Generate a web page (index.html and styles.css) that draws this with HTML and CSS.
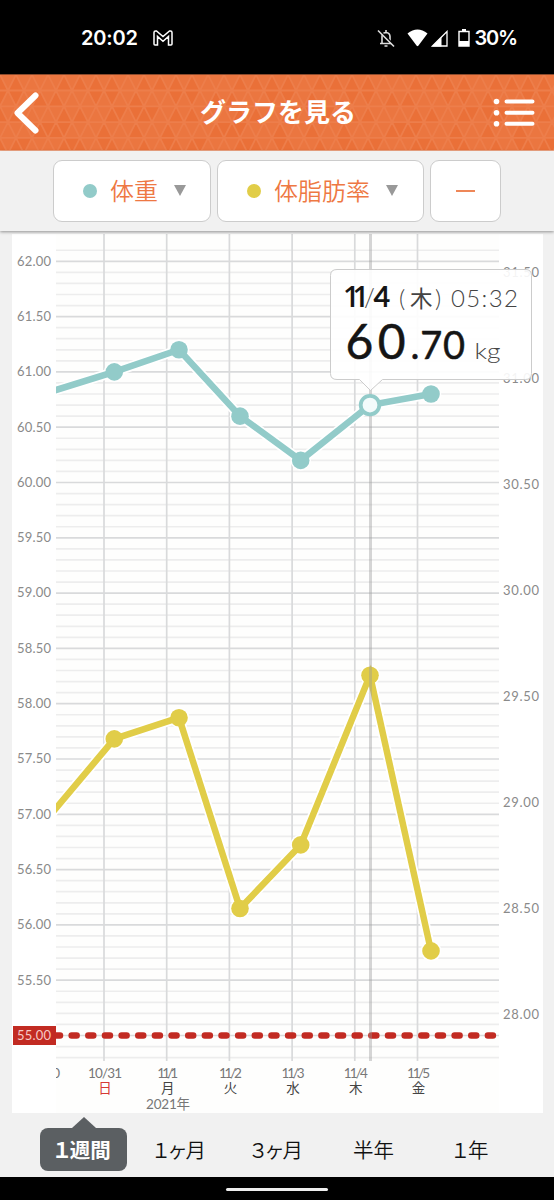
FILE: index.html
```html
<!DOCTYPE html>
<html lang="ja">
<head>
    <meta charset="UTF-8">
    <meta name="viewport" content="width=device-width, initial-scale=1.0">
    <title>グラフを見る</title>
    <link rel="stylesheet" href="styles.css">
</head>
<body>
    <div class="app">
        <!-- ステータスバー -->
        <div class="status-bar">
            <span class="clock">20:02</span>
            <svg class="icon-mail" width="20" height="16" viewBox="0 0 20 16">
                <path d="M1 14V2.5Q1 1 2.5 1H3.5L10 6.5 16.5 1H17.5Q19 1 19 2.5V14Q19 15 18 15H15.5V6.5L10 11.3 4.5 6.5V15H2Q1 15 1 14Z"/>
            </svg>
            <div class="status-right">
                <svg class="icon-bell" width="18" height="19" viewBox="0 0 18 19">
                    <path d="M3 14.5H15M5 14V7.5Q5 4 9 3.5Q13 4 13 7.5V14M9 3.5V1"/>
                    <path class="bell-cut" d="M2.5 1.5L18 17"/>
                    <path d="M1 1.5L17 17.5M7.5 17H10.5"/>
                </svg>
                <svg class="icon-wifi" width="21" height="18" viewBox="0 0 21 18">
                    <path d="M0.5 4.5Q10.5 -3.5 20.5 4.5L11.3 16.8Q10.5 17.6 9.7 16.8Z"/>
                </svg>
                <svg class="icon-signal" width="17" height="17" viewBox="0 0 17 17">
                    <path d="M1.5 16L16 1.5V16Z" fill="none" stroke="#fff" stroke-width="1.3"/>
                    <path d="M1 16.5L10.5 7V16.5Z" fill="#fff"/>
                </svg>
                <svg class="icon-battery" width="12" height="18" viewBox="0 0 12 18">
                    <path d="M1 2.5H11V17H1Z" fill="none" stroke="#fff" stroke-width="1.4"/>
                    <path d="M4 0H8V2.5H4ZM1 12H11V17H1Z" fill="#fff"/>
                </svg>
                <span class="percent">30%</span>
            </div>
        </div>

        <!-- ヘッダー -->
        <header class="header">
            <svg class="header-bg" id="headerBg" width="554" height="75"></svg>
            <svg class="icon-back" width="26" height="42" viewBox="0 0 26 42">
                <path d="M22.5 3.5L4.5 21 22.5 38.5"/>
            </svg>
            <h1>グラフを見る</h1>
            <svg class="icon-list" width="42" height="30" viewBox="0 0 42 30">
                <circle cx="3.5" cy="3.5" r="2.8"/>
                <circle cx="3.5" cy="14.8" r="2.8"/>
                <circle cx="3.5" cy="25.8" r="2.8"/>
                <path d="M13.5 3.5H39.5M13.5 14.8H39.5M13.5 25.8H39.5"/>
            </svg>
        </header>

        <!-- 項目の選択 -->
        <div class="filters">
            <button class="filter weight"><i class="dot"></i><span>体重</span><i class="arrow"></i></button>
            <button class="filter fat"><i class="dot"></i><span>体脂肪率</span><i class="arrow"></i></button>
            <button class="filter none"><i class="dash"></i></button>
        </div>

        <!-- グラフ -->
        <main class="chart-area">
            <svg class="chart" id="chart" width="531" height="879" viewBox="0 0 531 879">
                <defs>
                    <clipPath id="plotClip"><rect x="44" y="0" width="443" height="879"/></clipPath>
                </defs>
                <rect class="plot-bg" x="44" y="0" width="443" height="879"/>
                <g id="grid"></g>
                <g id="labels"></g>
                <g id="series" clip-path="url(#plotClip)"></g>
                <g class="tooltip">
                    <path class="tooltip-box" d="M325 35.5H513.5Q519.5 35.5 519.5 41.5V139.5Q519.5 145.5 513.5 145.5H370.5L358.5 156.5 347.5 145.5H325Q318.5 145.5 318.5 139.5V41.5Q318.5 35.5 325 35.5Z"/>
                    <text y="72.5"><tspan class="tip-month" x="331">11</tspan><tspan class="tip-slash" x="352">/</tspan><tspan class="tip-date" x="361.5">4</tspan><tspan class="tip-paren" x="387">(</tspan><tspan class="tip-day" x="398">木</tspan><tspan class="tip-paren" x="423">)</tspan></text>
                    <text class="tip-time" x="439" y="72.5" textLength="67">05:32</text>
                    <text class="tip-int" x="333.5" y="125" textLength="60">60</text>
                    <text class="tip-dec" x="398.5" y="125" textLength="54.5">.70</text>
                    <text class="tip-unit" x="462.5" y="125" textLength="26" lengthAdjust="spacingAndGlyphs">kg</text>
                </g>
            </svg>
        </main>

        <!-- 期間の切り替え -->
        <nav class="periods">
            <a class="period active">１週間</a>
            <a class="period">１ヶ月</a>
            <a class="period">３ヶ月</a>
            <a class="period">半年</a>
            <a class="period">１年</a>
        </nav>

        <div class="nav-bar"><span></span></div>
    </div>
    <script src="script.js"></script>
</body>
</html>
```
FILE: styles.css
```css
* {
    box-sizing: border-box;
}
body {
    margin: 0;
    background-color: #000;
    font-family: "Noto Sans CJK JP", sans-serif;
}
svg {
    display: block;
    flex: none;
}
.app {
    width: 554px;
    height: 1200px;
    display: flex;
    flex-direction: column;
    background-color: #f1f1f1;
    overflow: hidden;
}

/* ステータスバー */
.status-bar {
    height: 74px;
    flex: none;
    display: flex;
    align-items: center;
    padding: 2px 37px 0 81px;
    background-color: #000;
    color: #fff;
    font-family: Inter, sans-serif;
    font-size: 20px;
    font-weight: 600;
}
.clock {
    width: 72px;
    letter-spacing: -0.2px;
}
.percent {
    margin-left: 5px;
    letter-spacing: -1.2px;
}
.status-right {
    display: flex;
    align-items: center;
    margin-left: auto;
}
.icon-mail path {
    fill: none;
    stroke: #fff;
    stroke-width: 1.5;
}
.icon-bell {
    margin-right: 12px;
}
.icon-bell path {
    fill: none;
    stroke: #ddd;
    stroke-width: 1.6;
}
.icon-bell .bell-cut {
    stroke: #000;
}
.icon-wifi {
    fill: #fff;
    margin-right: 3px;
}
.icon-signal {
    margin-right: 10px;
}

/* ヘッダー */
.header {
    position: relative;
    height: 77px;
    flex: none;
    display: flex;
    align-items: center;
    justify-content: space-between;
    padding: 0 19px 0 13px;
    background-color: #ec7740;
    border-top: 1px solid #8c4a2c;
    border-bottom: 1px solid #f3a885;
}
.header-bg {
    position: absolute;
    top: 0;
    left: 0;
}
.header-bg .light {
    fill: #eb7640;
}
.header-bg .dark {
    fill: #ea7038;
}
.header-bg .line {
    fill: none;
    stroke: #ed7e4b;
    stroke-width: 1.8;
}
.header h1 {
    position: relative;
    margin: -3px 0 0 24px;
    color: #fff;
    font-size: 26px;
    font-weight: 700;
    line-height: 38px;
}
.icon-back,
.icon-list {
    position: relative;
}
.icon-back path {
    fill: none;
    stroke: #fff;
    stroke-width: 6;
    stroke-linecap: round;
    stroke-linejoin: round;
}
.icon-list {
    fill: #fff;
    stroke: #fff;
}
.icon-list circle {
    stroke: none;
}
.icon-list path {
    stroke-width: 4;
    stroke-linecap: round;
}

/* 項目の選択 */
.filters {
    position: relative;
    height: 80px;
    flex: none;
    display: flex;
    justify-content: center;
    gap: 6px;
    padding: 9px 0 0;
    background-color: #f1f1f1;
    box-shadow: 0 1px 3px rgba(0, 0, 0, 0.4);
}
.filter {
    height: 62px;
    display: flex;
    align-items: center;
    padding: 0 22px 0 29px;
    background-color: #fff;
    border: 1px solid #ccc;
    border-radius: 9px;
    color: #ee7843;
    font-family: inherit;
    font-size: 24px;
    font-weight: 350;
}
.filter.weight {
    width: 158px;
}
.filter.fat {
    width: 207px;
}
.filter.none {
    width: 71px;
    padding: 0;
    justify-content: center;
}
.dot {
    width: 14px;
    height: 14px;
    border-radius: 50%;
    margin-right: 13px;
}
.weight .dot {
    background-color: #92cbc9;
}
.fat .dot {
    background-color: #e1cd48;
}
.filter span {
    line-height: 36px;
    margin-top: -2px;
}
.arrow {
    margin: -2px 0 0 16px;
    border: 6.5px solid transparent;
    border-top: 11px solid #999;
    border-bottom: 0;
}
.dash {
    width: 19px;
    height: 2px;
    background-color: #ee8758;
}

/* グラフ */
.chart-area {
    height: 882px;
    flex: none;
    padding: 3px 0 0 12px;
}
.chart {
    background-color: #fff;
    font-family: Lato, "Noto Sans CJK JP", sans-serif;
}
.plot-bg {
    fill: #fefefd;
}
.minor {
    stroke: #ededed;
    stroke-width: 1.7;
}
.major {
    stroke: #d9dadb;
    stroke-width: 1.7;
}
.cursor {
    stroke: #999;
    stroke-opacity: 0.4;
    stroke-width: 3;
}
.axis-label {
    fill: #8a8a8a;
    font-size: 13px;
    font-weight: 400;
}
.day-label {
    fill: #444;
    font-size: 13.5px;
    text-anchor: middle;
}
.day-label.sunday {
    fill: #d63a35;
}
.date-label {
    fill: #777;
    font-size: 13.5px;
    text-anchor: middle;
}
.target-box {
    fill: #c22b22;
}
.target-text {
    fill: #f6c9c5;
    font-size: 13px;
}
.target-line {
    stroke: #c22b22;
    stroke-width: 6.5;
    stroke-linecap: round;
    stroke-dasharray: 5 11.65;
}
.halo {
    fill: none;
    stroke: #fff;
    stroke-width: 10;
    stroke-linejoin: round;
}
.weight-line {
    fill: none;
    stroke: #92cbc9;
    stroke-width: 6.5;
}
.weight-dot {
    fill: #92cbc9;
}
.fat-line {
    fill: none;
    stroke: #e1cd48;
    stroke-width: 6.5;
}
.fat-dot {
    fill: #e1cd48;
}
.selected-dot {
    fill: #f3fbfb;
    stroke: #92cbc9;
    stroke-width: 3.8;
}
.tooltip-box {
    fill: #fff;
    fill-opacity: 0.9;
    stroke: #ccc;
}
.tip-month {
    fill: #151515;
    font-family: "Open Sans", sans-serif;
    font-size: 29px;
    font-weight: 600;
    letter-spacing: -7px;
}
.tip-date {
    fill: #151515;
    font-size: 29px;
    font-weight: 700;
}
.tip-slash {
    fill: #444;
    font-size: 25px;
    font-weight: 300;
}
.tip-paren,
.tip-time {
    fill: #444;
    font-size: 24px;
    font-weight: 300;
}
.tip-day {
    fill: #444;
    font-size: 22.5px;
}
.tip-int,
.tip-dec {
    fill: #151515;
    stroke: #151515;
    stroke-width: 0.5;
    stroke-linejoin: round;
    font-weight: 400;
}
.tip-int {
    font-size: 48px;
}
.tip-dec {
    font-size: 38px;
}
.tip-unit {
    fill: #444;
    font-size: 21px;
    font-weight: 300;
}

/* 期間の切り替え */
.periods {
    height: 64px;
    flex: none;
    display: flex;
    padding: 15px 34px 6px 35px;
}
.period {
    width: 97px;
    display: flex;
    align-items: center;
    justify-content: center;
    color: #111;
    font-size: 20.5px;
    font-weight: 350;
    font-feature-settings: "palt";
    line-height: 43px;
    padding-right: 2px;
}
.period.active {
    position: relative;
    width: 87px;
    margin: 0 5px;
    background-color: #5b5f62;
    border-radius: 8px;
    color: #fff;
    font-weight: 700;
}
.period.active::before {
    content: "";
    position: absolute;
    top: -11px;
    left: 32px;
    border: 12px solid transparent;
    border-top: 0;
    border-bottom: 11px solid #5b5f62;
}

.nav-bar {
    height: 23px;
    flex: none;
    display: flex;
    justify-content: center;
    padding-top: 11px;
    background-color: #000;
}
.nav-bar span {
    width: 102px;
    height: 3px;
    border-radius: 2px;
    background-color: #eee;
}
```
FILE: script.js
```js
const NS = 'http://www.w3.org/2000/svg';
const LEFT = 44;
const RIGHT = 487;

function add(parent, tag, attrs, text) {
    const el = document.createElementNS(NS, tag);
    for (const key in attrs) el.setAttribute(key, attrs[key]);
    if (text) el.textContent = text;
    parent.appendChild(el);
    return el;
}

const weightY = v => 801.5 - (v - 55) * 110.6;
const fatY = v => 780.5 - (v - 28) * 212;

// ヘッダーの三角模様
function drawHeader() {
    const bg = document.getElementById('headerBg');
    const h = 15.8;
    let lines = '';
    for (let row = 0; row < 5; row++) {
        const top = row * h - 0.3;
        const shift = row % 2 ? 8 : 0;
        for (let i = -1; i < 36; i++) {
            const x = i * 16 + shift;
            const up = `M${x} ${top}L${x - 8} ${top + h}H${x + 8}Z`;
            const down = `M${x} ${top}H${x + 16}L${x + 8} ${top + h}Z`;
            const n = (i * 7 + row * 5 + i * i * 3 + 70) % 11;
            add(bg, 'path', { d: up, class: n < 5 ? 'dark' : 'light' });
            add(bg, 'path', { d: down, class: n % 4 === 1 ? 'dark' : 'light' });
            lines += up;
        }
    }
    add(bg, 'path', { d: lines, class: 'line' });
}

function drawGrid() {
    const grid = document.getElementById('grid');
    for (let i = -2; i <= 71; i++) {
        if (i % 5 === 0) continue;
        const y = weightY(55 + i / 10);
        add(grid, 'line', { x1: LEFT, x2: RIGHT, y1: y, y2: y, class: 'minor' });
    }
    for (let i = 0; i <= 14; i++) {
        const y = weightY(55 + i / 2);
        add(grid, 'line', { x1: LEFT, x2: RIGHT, y1: y, y2: y, class: 'major' });
    }
    for (let i = 0; i < 6; i++) {
        const x = 92 + i * 62.7;
        add(grid, 'line', { x1: x, x2: x, y1: 0, y2: 827, class: 'major' });
    }
}

function drawLabels() {
    const labels = document.getElementById('labels');
    add(labels, 'rect', { x: 1, y: 792, width: 43, height: 19, class: 'target-box' });
    for (let i = 0; i <= 14; i++) {
        const v = 55 + i / 2;
        add(labels, 'text', {
            x: 5, y: weightY(v) + 4.3, textLength: 34,
            class: i === 0 ? 'target-text' : 'axis-label'
        }, v.toFixed(2));
    }
    for (let v = 28; v <= 31.5; v += 0.5) {
        add(labels, 'text', { x: 491, y: fatY(v) + 4.5, textLength: 36, class: 'axis-label' }, v.toFixed(2));
    }

    const days = [['10/31', '日', 34], ['11/1', '月', 21], ['11/2', '火', 23], ['11/3', '水', 23], ['11/4', '木', 24], ['11/5', '金', 23]];
    days.forEach(([date, day, width], i) => {
        const x = 93 + i * 62.7;
        add(labels, 'text', { x: x, y: 843.5, textLength: width, class: 'date-label' }, date);
        add(labels, 'text', { x: x, y: 858.5, class: i ? 'day-label' : 'day-label sunday' }, day);
    });
    add(labels, 'text', { x: 156, y: 874.5, textLength: 44, class: 'date-label' }, '2021年');
    const prev = add(labels, 'g', { 'clip-path': 'url(#plotClip)' });
    add(prev, 'text', { x: 31, y: 843.5, textLength: 34, class: 'date-label' }, '10/30');
}

function drawSeries(name, points) {
    const series = document.getElementById('series');
    const path = points.map(p => p.join(',')).join(' ');
    add(series, 'polyline', { points: path, class: 'halo' });
    points.forEach(p => add(series, 'circle', { cx: p[0], cy: p[1], r: 10.3, fill: '#fff' }));
    add(series, 'polyline', { points: path, class: name + '-line' });
    points.forEach(p => add(series, 'circle', { cx: p[0], cy: p[1], r: 8.8, class: name + '-dot' }));
}

const xs = [31, 102.3, 167, 228, 288.7, 358, 419];
const weights = [60.8, 61.0, 61.2, 60.6, 60.2, 60.7, 60.8];
const fats = [28.9, 29.3, 29.4, 28.5, 28.8, 29.6, 28.3];

drawHeader();
drawGrid();
drawLabels();

const series = document.getElementById('series');
add(series, 'line', { x1: 43, x2: 482, y1: 801.5, y2: 801.5, class: 'target-line' });
drawSeries('fat', xs.map((x, i) => [x, fatY(fats[i])]));
drawSeries('weight', xs.map((x, i) => [x, weightY(weights[i])]));
add(series, 'line', { x1: 358.5, x2: 358.5, y1: 0, y2: 827, class: 'cursor' });
add(series, 'circle', { cx: 358, cy: weightY(60.7), r: 9.3, class: 'selected-dot' });
```
